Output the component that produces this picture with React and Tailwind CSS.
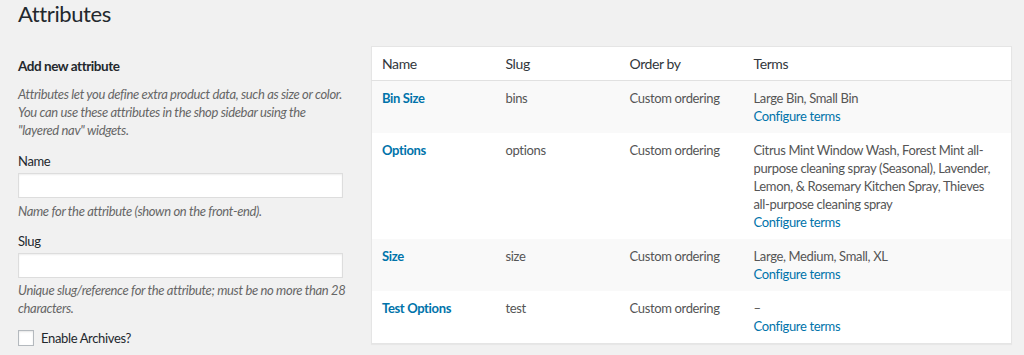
const rows = [
  { name: 'Bin Size', slug: 'bins', order: 'Custom ordering', terms: ['Large Bin, Small Bin'] },
  {
    name: 'Options',
    slug: 'options',
    order: 'Custom ordering',
    terms: [
      'Citrus Mint Window Wash, Forest Mint all-',
      'purpose cleaning spray (Seasonal), Lavender,',
      'Lemon, & Rosemary Kitchen Spray, Thieves',
      'all-purpose cleaning spray',
    ],
  },
  { name: 'Size', slug: 'size', order: 'Custom ordering', terms: ['Large, Medium, Small, XL'] },
  { name: 'Test Options', slug: 'test', order: 'Custom ordering', terms: ['–'] },
];

const th = 'px-[10px] py-[7px] text-[14px] font-normal leading-[19px] tracking-[-0.4px] text-[#32373c]';
const td = 'px-[10px] py-[8px] align-top leading-[18px]';

export default function App() {
  return (
    <div
      className="min-h-[355px] bg-[#f1f1f1] pl-[18px] pr-[12px] text-[13px] tracking-[-0.35px] text-[#444]"
      style={{ fontFamily: 'Lato, "Noto Sans", sans-serif' }}
    >
      {/* Title */}
      <div className="h-[46px]">
        <h1 className="text-[22px] font-normal leading-[27px] tracking-[-0.4px] text-[#23282d]">Attributes</h1>
      </div>

      <div className="flex gap-[11px]">
        {/* Left: add form */}
        <div className="w-[342px] shrink-0">
          <h2 className="mt-[11px] text-[13.5px] font-bold leading-[18px] tracking-[-0.45px] text-[#23282d]">
            Add new attribute
          </h2>
          <p className="mt-[10px] italic leading-[18px] text-[#666]">
            Attributes let you define extra product data, such as size or color.
            <br />
            You can use these attributes in the shop sidebar using the
            <br />
            "layered nav" widgets.
          </p>

          <label className="mt-[13px] block leading-[18px] text-[#23282d]">Name</label>
          <input
            type="text"
            className="mt-[3px] block h-[25px] w-[325px] border border-[#ddd] bg-white shadow-[inset_0_1px_2px_rgba(0,0,0,0.07)]"
          />
          <p className="mt-[4px] italic leading-[18px] text-[#666]">Name for the attribute (shown on the front-end).</p>

          <label className="mt-[12px] block leading-[18px] text-[#23282d]">Slug</label>
          <input
            type="text"
            className="mt-[3px] block h-[25px] w-[325px] border border-[#ddd] bg-white shadow-[inset_0_1px_2px_rgba(0,0,0,0.07)]"
          />
          <p className="mt-[3px] italic leading-[18px] text-[#666]">
            Unique slug/reference for the attribute; must be no more than 28
            <br />
            characters.
          </p>

          <label className="mt-[12px] flex items-center gap-[7px] leading-[18px] text-[#23282d]">
            <span className="block h-[16px] w-[16px] border border-[#b4b9be] bg-white shadow-[inset_0_1px_2px_rgba(0,0,0,0.1)]" />
            Enable Archives?
          </label>
        </div>

        {/* Right: table */}
        <div className="w-[641px] shrink-0">
          <table className="w-full table-fixed border-collapse border border-[#e5e5e5] bg-white shadow-[0_1px_1px_rgba(0,0,0,0.04)]">
            <colgroup>
              <col className="w-[124px]" />
              <col className="w-[124px]" />
              <col className="w-[124px]" />
              <col />
            </colgroup>
            <thead>
              <tr className="border-b border-[#e1e1e1] text-left">
                <th className={th}>Name</th>
                <th className={th}>Slug</th>
                <th className={th}>Order by</th>
                <th className={th}>Terms</th>
              </tr>
            </thead>
            <tbody>
              {rows.map((r, i) => (
                <tr key={r.slug} className={i % 2 === 0 ? 'bg-[#f9f9f9]' : 'bg-white'}>
                  <td className={td}>
                    <a className="font-bold text-[#0073aa]">{r.name}</a>
                  </td>
                  <td className={td + ' text-[#555]'}>{r.slug}</td>
                  <td className={td + ' text-[#555]'}>{r.order}</td>
                  <td className={td + ' text-[#555]'}>
                    {r.terms.map((line) => (
                      <div key={line}>{line}</div>
                    ))}
                    <a className="text-[#0073aa]">Configure terms</a>
                  </td>
                </tr>
              ))}
            </tbody>
          </table>
        </div>
      </div>
    </div>
  );
}
